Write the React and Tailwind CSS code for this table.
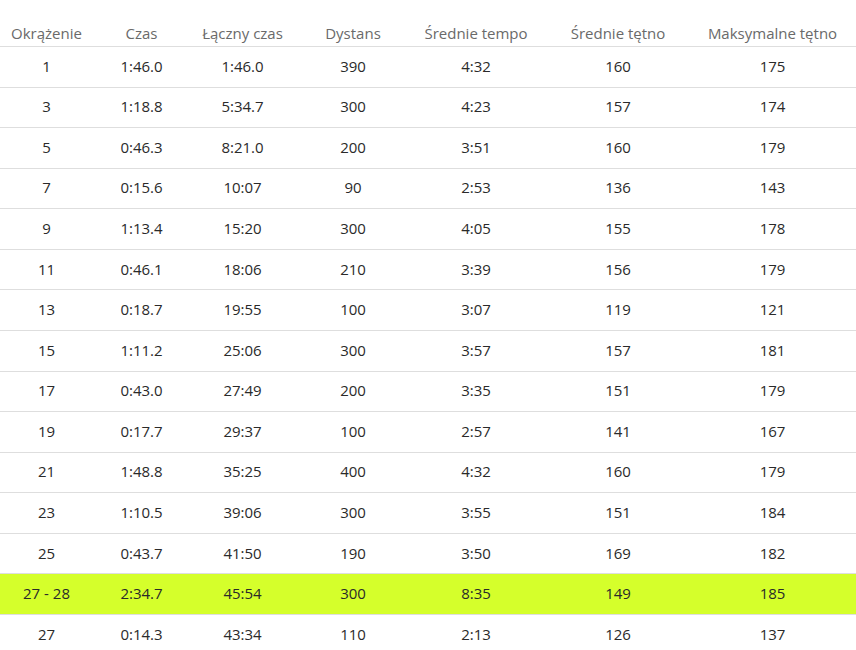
import React from "react";

const rows = [
  ["1", "1:46.0", "1:46.0", "390", "4:32", "160", "175"],
  ["3", "1:18.8", "5:34.7", "300", "4:23", "157", "174"],
  ["5", "0:46.3", "8:21.0", "200", "3:51", "160", "179"],
  ["7", "0:15.6", "10:07", "90", "2:53", "136", "143"],
  ["9", "1:13.4", "15:20", "300", "4:05", "155", "178"],
  ["11", "0:46.1", "18:06", "210", "3:39", "156", "179"],
  ["13", "0:18.7", "19:55", "100", "3:07", "119", "121"],
  ["15", "1:11.2", "25:06", "300", "3:57", "157", "181"],
  ["17", "0:43.0", "27:49", "200", "3:35", "151", "179"],
  ["19", "0:17.7", "29:37", "100", "2:57", "141", "167"],
  ["21", "1:48.8", "35:25", "400", "4:32", "160", "179"],
  ["23", "1:10.5", "39:06", "300", "3:55", "151", "184"],
  ["25", "0:43.7", "41:50", "190", "3:50", "169", "182"],
  ["27 - 28", "2:34.7", "45:54", "300", "8:35", "149", "185", true],
  ["27", "0:14.3", "43:34", "110", "2:13", "126", "137"],
];

const headers = [
  "Okrążenie",
  "Czas",
  "Łączny czas",
  "Dystans",
  "Średnie tempo",
  "Średnie tętno",
  "Maksymalne tętno",
];

const cols = "grid grid-cols-[93px_97px_105px_116px_130px_154px_155px]";

export default function App() {
  return (
    <div
      className="w-[856px] h-[650px] overflow-hidden bg-white text-[15px]"
      style={{ fontFamily: '"Open Sans", "Noto Sans", sans-serif' }}
    >
      <div className={`${cols} h-[47px] border-b border-[#dedede] items-end pb-[3px] text-[#6a6a6a]`}>
        {headers.map((h) => (
          <div key={h} className="text-center leading-5 whitespace-nowrap">
            {h}
          </div>
        ))}
      </div>
      {rows.map((r, i) => (
        <div
          key={i}
          className={`${cols} h-[40.57px] border-b border-[#dedede] items-center pb-[2px] text-[#2a2a2a] ${
            r[7] ? "bg-[#d5ff2b]" : ""
          }`}
        >
          {r.slice(0, 7).map((c, j) => (
            <div key={j} className="text-center leading-5">
              {c}
            </div>
          ))}
        </div>
      ))}
    </div>
  );
}
